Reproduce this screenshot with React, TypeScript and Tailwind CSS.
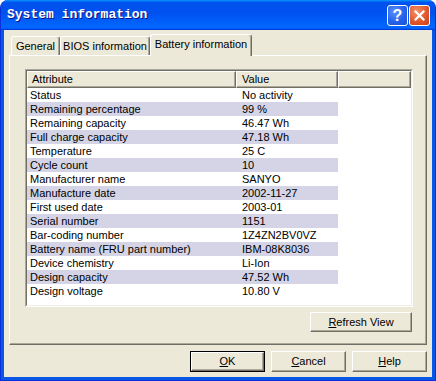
import React from 'react';

// System information dialog - Battery information tab (XP style)

const rows: [string, string][] = [
  ['Status', 'No activity'],
  ['Remaining percentage', '99 %'],
  ['Remaining capacity', '46.47 Wh'],
  ['Full charge capacity', '47.18 Wh'],
  ['Temperature', '25 C'],
  ['Cycle count', '10'],
  ['Manufacturer name', 'SANYO'],
  ['Manufacture date', '2002-11-27'],
  ['First used date', '2003-01'],
  ['Serial number', '1151'],
  ['Bar-coding number', '1Z4ZN2BV0VZ'],
  ['Battery name (FRU part number)', 'IBM-08K8036'],
  ['Device chemistry', 'Li-Ion'],
  ['Design capacity', '47.52 Wh'],
  ['Design voltage', '10.80 V'],
];

function Button({
  children,
  isDefault,
  className = '',
}: {
  children: React.ReactNode;
  isDefault?: boolean;
  className?: string;
}) {
  const face = (
    <div className="flex h-full w-full items-center justify-center border border-t-white border-l-white border-r-[#716f64] border-b-[#716f64] shadow-[inset_-1px_-1px_0_#aca899] leading-none">
      {children}
    </div>
  );
  return isDefault ? (
    <div className={`border border-black ${className}`}>{face}</div>
  ) : (
    <div className={className}>{face}</div>
  );
}

function Tab({ label, selected }: { label: string; selected?: boolean }) {
  if (selected) {
    return (
      <div className="relative -mb-px flex h-[22px] w-[102px] items-center justify-center rounded-t-[3px] border-t border-l border-r border-t-white border-l-white border-r-[#716f64] bg-[#ece9d8] pb-[2px] shadow-[inset_-1px_0_0_#aca899]">
        {label}
      </div>
    );
  }
  return (
    <div className="flex h-[19px] items-center justify-center rounded-t-[3px] border-t border-l border-r border-t-white border-l-white border-r-[#716f64] pt-[1px] shadow-[inset_-1px_0_0_#aca899]">
      {label}
    </div>
  );
}

export default function App() {
  return (
    <div className="flex h-[381px] w-[436px] flex-col overflow-hidden rounded-t-[8px] border-x border-b border-[#0831d9] bg-[#0a56e6] font-['Liberation_Sans',Arial,sans-serif] text-[11px] text-black">
      {/* Title bar */}
      <div className="-mx-px flex h-[30px] shrink-0 items-center bg-[linear-gradient(180deg,#0997ff_0%,#0053ee_8%,#0050ee_40%,#0066ff_88%,#0066ff_93%,#005bff_95%,#003dd7_96%,#003dd7_100%)] pl-[7px] pr-[6px]">
        <span className="font-['Liberation_Mono',monospace] text-[13px] font-bold text-white [text-shadow:1px_1px_0_#0f1089]">
          System information
        </span>
        <div className="ml-auto flex gap-[1px] pt-[1px]">
          <div className="flex h-[21px] w-[21px] items-center justify-center rounded-[3px] border border-white bg-[radial-gradient(circle_at_35%_30%,#5b90ff_0%,#2563ea_55%,#1a4fd2_100%)] font-['Liberation_Sans',sans-serif] text-[16px] font-bold leading-none text-white">
            ?
          </div>
          <div className="flex h-[21px] w-[21px] items-center justify-center rounded-[3px] border border-white bg-[radial-gradient(circle_at_35%_30%,#f2936b_0%,#e2582c_55%,#c8401b_100%)]">
            <svg width="11" height="11" viewBox="0 0 11 11">
              <path d="M1.5 1.5 L9.5 9.5 M9.5 1.5 L1.5 9.5" stroke="white" strokeWidth="2.2" strokeLinecap="square" />
            </svg>
          </div>
        </div>
      </div>

      {/* Client area */}
      <div className="mx-[3px] mb-[3px] flex flex-1 flex-col bg-[#ece9d8] px-[5px] pt-[4px]">
        {/* Tabs */}
        <div className="relative z-10 flex h-[21px] items-end pl-[2px]">
          <div className="w-[49px]">
            <Tab label="General" />
          </div>
          <div className="w-[90px]">
            <Tab label="BIOS information" />
          </div>
          <Tab label="Battery information" selected />
        </div>

        {/* Tab panel */}
        <div className="h-[290px] w-[418px] border border-t-white border-l-white border-r-[#716f64] border-b-[#716f64] pl-[15px] pt-[13px] shadow-[inset_-1px_-1px_0_#aca899]">
          {/* List view */}
          <div className="h-[238px] w-[388px] border border-t-[#aca899] border-l-[#aca899] border-b-white border-r-white">
            <div className="h-full w-full border border-t-[#716f64] border-l-[#716f64] border-b-[#f1efe2] border-r-[#f1efe2] bg-white">
              <div className="flex h-[17px] bg-[#ece9d8]">
                <div className="flex w-[209px] items-center border border-t-white border-l-white border-r-[#716f64] border-b-[#716f64] pl-[4px] shadow-[inset_-1px_-1px_0_#aca899]">
                  Attribute
                </div>
                <div className="flex w-[102px] items-center border border-t-white border-l-white border-r-[#716f64] border-b-[#716f64] pl-[5px] shadow-[inset_-1px_-1px_0_#aca899]">
                  Value
                </div>
                <div className="flex-1 border border-t-white border-l-white border-r-[#716f64] border-b-[#716f64] shadow-[inset_-1px_-1px_0_#aca899]" />
              </div>
              {rows.map(([attr, value], i) => (
                <div
                  key={attr}
                  className={`flex h-[14px] w-[311px] leading-[14px] ${i % 2 === 1 ? 'bg-[#d4d4e6]' : ''}`}
                >
                  <div className="w-[209px] pl-[3px]">{attr}</div>
                  <div className="w-[102px] pl-[6px]">{value}</div>
                </div>
              ))}
            </div>
          </div>

          <div className="mt-[5px] flex w-[388px] justify-end pr-[1px]">
            <Button className="h-[20px] w-[102px]">
              <span>
                <span className="underline">R</span>efresh View
              </span>
            </Button>
          </div>
        </div>

        {/* Dialog buttons */}
        <div className="mt-[6px] flex w-[418px] justify-end gap-[6px]">
          <Button isDefault className="h-[21px] w-[75px]">
            <span>
              <span className="underline">O</span>K
            </span>
          </Button>
          <Button className="h-[21px] w-[75px]">
            <span>
              <span className="underline">C</span>ancel
            </span>
          </Button>
          <Button className="h-[21px] w-[75px]">
            <span>
              <span className="underline">H</span>elp
            </span>
          </Button>
        </div>
      </div>
    </div>
  );
}
